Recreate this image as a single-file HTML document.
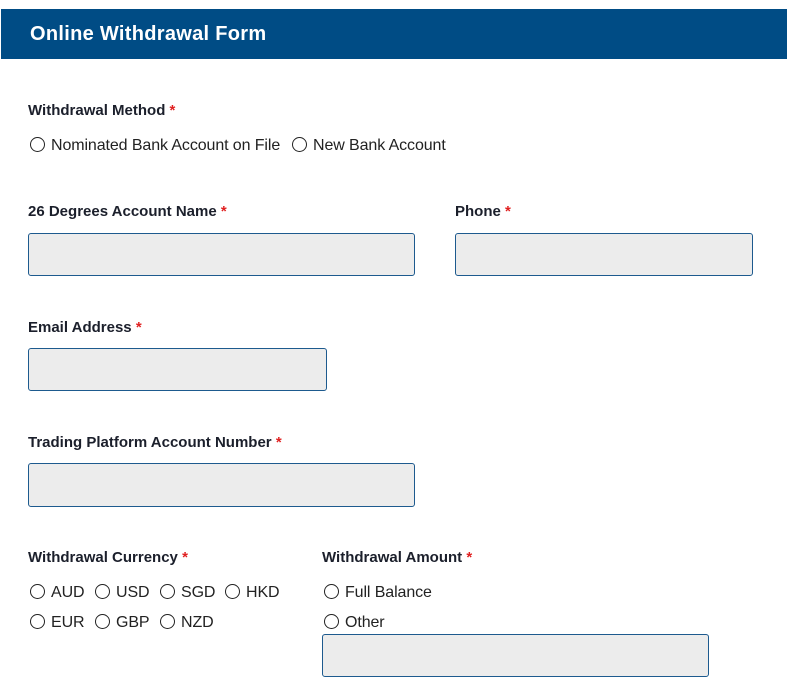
<!DOCTYPE html>
<html><head><meta charset="utf-8"><style>
body{margin:0;width:787px;height:687px;background:#fff;font-family:"Liberation Sans",Arial,sans-serif;position:relative;overflow:hidden;color:#222}
.hd{position:absolute;left:1px;top:9px;width:786px;height:50px;background:#004c85}
.hd span{position:absolute;left:29px;top:14px;color:#fff;font-weight:bold;font-size:20px;letter-spacing:0.3px}
.l{position:absolute;font-weight:bold;font-size:15px;color:#1b1f2b}
.l i{font-style:normal;color:#e02020}
.in{position:absolute;background:#ececec;border:1px solid #1d5a8e;border-radius:3px;box-sizing:border-box}
.r{position:absolute;font-size:16px;color:#222;white-space:nowrap;letter-spacing:-0.1px}
.r b{display:inline-block;width:13px;height:13px;border:1.5px solid #222;border-radius:50%;vertical-align:-2px;margin-right:6px;font-weight:normal}
</style></head><body>
<div class="hd"><span>Online Withdrawal Form</span></div>
<div class="l" style="left:28px;top:102px">Withdrawal Method <i>*</i></div>
<div class="r" style="left:30px;top:137px"><b></b>Nominated Bank Account on File</div>
<div class="r" style="left:292px;top:137px"><b></b>New Bank Account</div>
<div class="l" style="left:28px;top:203px">26 Degrees Account Name <i>*</i></div>
<div class="l" style="left:455px;top:203px">Phone <i>*</i></div>
<div class="in" style="left:28px;top:233px;width:387px;height:43px"></div>
<div class="in" style="left:455px;top:233px;width:298px;height:43px"></div>
<div class="l" style="left:28px;top:319px">Email Address <i>*</i></div>
<div class="in" style="left:28px;top:348px;width:299px;height:43px"></div>
<div class="l" style="left:28px;top:434px">Trading Platform Account Number <i>*</i></div>
<div class="in" style="left:28px;top:463px;width:387px;height:44px"></div>
<div class="l" style="left:28px;top:549px">Withdrawal Currency <i>*</i></div>
<div class="l" style="left:322px;top:549px">Withdrawal Amount <i>*</i></div>
<div class="r" style="left:30px;top:584px"><b></b>AUD</div>
<div class="r" style="left:95px;top:584px"><b></b>USD</div>
<div class="r" style="left:160px;top:584px"><b></b>SGD</div>
<div class="r" style="left:225px;top:584px"><b></b>HKD</div>
<div class="r" style="left:30px;top:614px"><b></b>EUR</div>
<div class="r" style="left:95px;top:614px"><b></b>GBP</div>
<div class="r" style="left:160px;top:614px"><b></b>NZD</div>
<div class="r" style="left:324px;top:584px"><b></b>Full Balance</div>
<div class="r" style="left:324px;top:614px"><b></b>Other</div>
<div class="in" style="left:322px;top:634px;width:387px;height:43px"></div>
</body></html>
